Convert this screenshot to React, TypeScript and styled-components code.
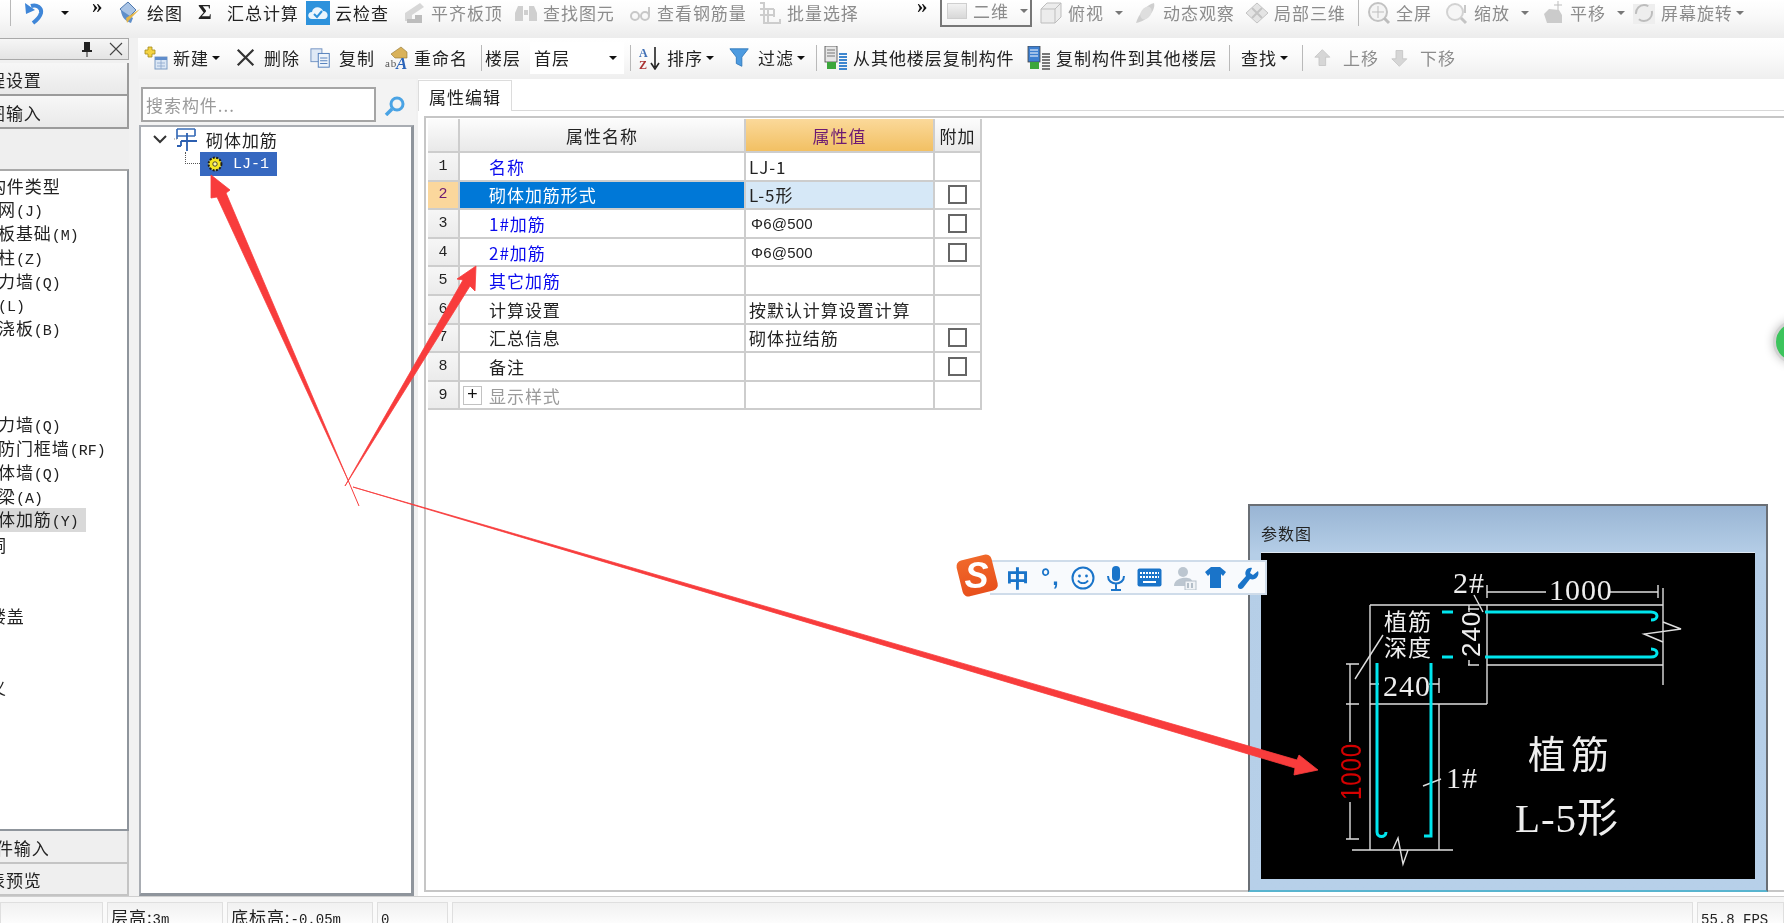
import React from "react";
import styled, { createGlobalStyle } from "styled-components";

const cjk = `"Noto Sans CJK SC", "Liberation Sans", sans-serif`;
const mono = `"Liberation Mono", "Noto Sans CJK SC", monospace`;
const serif = `"Liberation Serif", "Noto Sans CJK SC", serif`;

const Global = createGlobalStyle`
  html, body { margin: 0; padding: 0; background: #fff; }
  * { box-sizing: border-box; }
`;

const Root = styled.div`
  position: relative;
  width: 1784px;
  height: 923px;
  overflow: hidden;
  display: flex;
  flex-direction: column;
  background: #f1f1f1;
  color: #222;
  font-family: ${cjk};
  font-size: 17px;
  letter-spacing: 0.95px;
  line-height: 1;
  filter: blur(0.35px);
`;

const TopBar = styled.div`
  height: 38px;
  flex: none;
  display: flex;
  align-items: center;
  padding-bottom: 13px;
  background: linear-gradient(#ffffff, #f9f9f9 45%, #ececec);
`;

const SecondBar = styled.div`
  height: 41px;
  flex: none;
  display: flex;
  align-items: center;
  padding: 0 0 2px 6px;
  background: linear-gradient(#ffffff, #fbfbfb 40%, #efefef);
`;

const MainColumn = styled.div`
  flex: 1;
  min-width: 0;
  display: flex;
  flex-direction: column;
`;

const Workspace = styled.div`
  flex: 1;
  min-height: 0;
  display: flex;
`;

const ToolWrap = styled.div<{ $w: number; $muted?: boolean }>`
  width: ${(p) => p.$w}px;
  flex: none;
  display: flex;
  align-items: center;
  white-space: nowrap;
  color: ${(p) => (p.$muted ? "#8c8c8c" : "#222")};
`;

const IconSlot = styled.span<{ $w?: number }>`
  width: ${(p) => p.$w ?? 29}px;
  height: 24px;
  flex: none;
  display: flex;
  align-items: center;
`;

const Caret = styled.i<{ $far?: boolean; $muted?: boolean }>`
  width: 0;
  height: 0;
  flex: none;
  margin-left: ${(p) => (p.$far ? 11 : 3)}px;
  border-left: 4px solid transparent;
  border-right: 4px solid transparent;
  border-top: 4px solid ${(p) => (p.$muted ? "#777" : "#111")};
`;

const Sep = styled.i<{ $after?: number; $before?: number }>`
  width: 1px;
  height: 26px;
  flex: none;
  margin-left: ${(p) => p.$before ?? 0}px;
  margin-right: ${(p) => p.$after ?? 0}px;
  background: #b9b9b9;
`;

const Chevrons = styled.span<{ $w: number }>`
  width: ${(p) => p.$w}px;
  flex: none;
  align-self: flex-start;
  font: bold 21px ${serif};
  letter-spacing: 0;
  color: #111;
  margin-top: -6px;
`;

const ViewCombo = styled.div`
  width: 92px;
  height: 31px;
  margin: -2px 7px 0 0;
  flex: none;
  display: flex;
  align-items: center;
  padding-left: 5px;
  border: 2px solid #777;
  border-top: 0;
  color: #8c8c8c;
`;

const Swatch = styled.i`
  width: 20px;
  height: 16px;
  margin-right: 6px;
  flex: none;
  background: linear-gradient(#f2f2f2, #d8d8d8);
  border: 1px solid #cfcfcf;
`;

const FloorLabel = styled.span`
  width: 45px;
  flex: none;
`;

const FloorCombo = styled.div`
  width: 94px;
  height: 32px;
  flex: none;
  margin-right: 6px;
  display: flex;
  align-items: center;
  justify-content: space-between;
  padding: 0 7px 0 4px;
  background: #fff;
`;

const Body = styled.div`
  height: 858px;
  flex: none;
  display: flex;
`;

const LeftPanel = styled.div`
  width: 138px;
  flex: none;
  display: flex;
  flex-direction: column;
  padding-right: 9px;
`;

const PanelHead = styled.div`
  height: 22px;
  flex: none;
  margin-bottom: 3px;
  display: flex;
  align-items: center;
  justify-content: flex-end;
  gap: 16px;
  padding-right: 5px;
  background: linear-gradient(#f6f6f6, #e4e4e4);
  border: 1px solid #a9a9a9;
  border-left: 0;
`;

const NavBtn = styled.div<{ $shift: number; $flat?: boolean }>`
  height: ${(p) => (p.$flat ? 32.5 : 33)}px;
  flex: none;
  display: flex;
  align-items: center;
  padding-top: 2px;
  overflow: hidden;
  white-space: nowrap;
  background: ${(p) => (p.$flat ? "#efefef" : "linear-gradient(#f7f7f7, #e9e9e9)")};
  border-right: 2px solid ${(p) => (p.$flat ? "#c4c4c4" : "#9b9b9b")};
  border-bottom: 2px solid ${(p) => (p.$flat ? "#c4c4c4" : "#9b9b9b")};
  & > span {
    margin-left: ${(p) => p.$shift}px;
  }
`;

const PanelGap = styled.div`
  flex: none;
  height: 40px;
  background: #efefef;
`;

const NavList = styled.div`
  height: 662px;
  flex: none;
  overflow: hidden;
  padding-top: 3px;
  background: #fff;
  border-top: 2px solid #a9a9a9;
  border-right: 2px solid #8f959c;
  border-bottom: 2px solid #8f959c;
`;

const NavRow = styled.div<{ $child?: boolean; $active?: boolean }>`
  height: 23.9px;
  width: 86px;
  display: flex;
  align-items: center;
  white-space: nowrap;
  background: ${(p) => (p.$active ? "#d9d9d9" : "transparent")};
  & > span {
    margin-left: ${(p) => (p.$child ? -20 : -47)}px;
  }
`;

const Latin = styled.span`
  font-family: ${mono};
  font-size: 15px;
  letter-spacing: 0;
`;

const TreeCol = styled.div`
  width: 277px;
  margin-left: 1px;
  flex: none;
  display: flex;
  flex-direction: column;
`;

const SearchRow = styled.div`
  height: 46px;
  flex: none;
  display: flex;
  align-items: flex-start;
  padding: 8px 0 0 2px;
  gap: 8px;
  background: #f3f3f3;
`;

const SearchBox = styled.div`
  width: 235px;
  height: 35px;
  display: flex;
  align-items: center;
  padding-left: 3px;
  background: #fff;
  border: 2px solid #a5a5a5;
  color: #9a9a9a;
`;

const SearchBtn = styled.span`
  margin-top: 9px;
  display: block;
`;

const TreeBox = styled.div`
  flex: 1;
  margin-right: 2px;
  background: #fff;
  border-top: 2px solid #a9adb3;
  border-left: 2px solid #a9adb3;
  border-right: 3px solid #8f959c;
  border-bottom: 3px solid #8f959c;
`;

const TreeRootRow = styled.div`
  height: 25px;
  display: flex;
  align-items: center;
  padding-left: 12px;
  white-space: nowrap;
`;

const TreeChildRow = styled.div`
  height: 24px;
  display: flex;
  align-items: flex-start;
  padding-left: 44px;
`;

const Connector = styled.i`
  width: 15px;
  height: 12px;
  flex: none;
  border-left: 1px dotted #555;
  border-bottom: 1px dotted #555;
`;

const TreeSelected = styled.div`
  width: 77px;
  height: 24px;
  display: flex;
  align-items: center;
  gap: 10px;
  padding-left: 7px;
  background: #3668c0;
  color: #fff;
`;

const PropCol = styled.div`
  flex: 1;
  margin-left: 2px;
  display: flex;
  flex-direction: column;
  background: #fff;
`;

const TabRow = styled.div`
  height: 32px;
  flex: none;
  display: flex;
  align-items: flex-end;
  border-bottom: 1px solid #d8d8d8;
  background: #fff;
`;

const Tab = styled.div`
  width: 94px;
  height: 31px;
  margin-bottom: -1px;
  display: flex;
  align-items: center;
  justify-content: center;
  background: #fff;
  border: 1px solid #dcdcdc;
  border-bottom: 0;
`;

const TablePanel = styled.div`
  flex: 1;
  margin: 5px 0 4px 6px;
  background: #fff;
  border-top: 2px solid #c6c6c6;
  border-left: 2px solid #c6c6c6;
  border-bottom: 2px solid #c6c6c6;
  padding: 1px 0 0 2px;
`;

const Grid = styled.div`
  width: 554px;
  display: grid;
  grid-template-columns: 32px 286px 189px 47px;
  grid-template-rows: 34px repeat(9, 28.6px);
`;

const Cell = styled.div<{ $tone?: string }>`
  display: flex;
  align-items: center;
  overflow: hidden;
  white-space: nowrap;
  border-right: 2px solid #cdcdcd;
  border-bottom: 2px solid #cdcdcd;
  background: ${(p) => p.$tone ?? "#fff"};
`;

const HeadCell = styled(Cell)<{ $accent?: boolean }>`
  justify-content: center;
  color: ${(p) => (p.$accent ? "#6d1a72" : "#222")};
  background: ${(p) =>
    p.$accent ? "linear-gradient(#fbd99a, #f2c063)" : "linear-gradient(#fcfcfc, #e9e9e9)"};
`;

const IndexCell = styled(Cell)<{ $on?: boolean }>`
  justify-content: center;
  font-family: ${mono};
  font-size: 15px;
  letter-spacing: 0;
  color: ${(p) => (p.$on ? "#6d1a72" : "#222")};
  background: ${(p) => (p.$on ? "#fbd79c" : "linear-gradient(#f6f6f6, #ebebeb)")};
`;

const NameCell = styled(Cell)<{ $kind: string }>`
  padding-left: ${(p) => (p.$kind === "fold" ? 3 : 29)}px;
  color: ${(p) =>
    p.$kind === "blue" ? "#0a0aee" : p.$kind === "sel" ? "#fff" : p.$kind === "fold" ? "#9a9a9a" : "#222"};
  background: ${(p) => (p.$kind === "sel" ? "#0078d7" : "#fff")};
`;

const ValueCell = styled(Cell)<{ $sel?: boolean; $rebar?: boolean }>`
  padding-left: ${(p) => (p.$rebar ? 5 : 3)}px;
  background: ${(p) => (p.$sel ? "#d6e8f7" : "#fff")};
  ${(p) => p.$rebar && `font-family: "Liberation Sans", sans-serif; font-size: 15px; letter-spacing: 0.2px;`}
`;

const CheckCell = styled(Cell)`
  justify-content: center;
`;

const Check = styled.i`
  width: 19px;
  height: 19px;
  border: 2px solid #666;
  background: #fff;
`;

const Plus = styled.i`
  width: 19px;
  height: 19px;
  margin-right: 7px;
  flex: none;
  display: flex;
  align-items: center;
  justify-content: center;
  border: 1px solid #c2c2c2;
  font: normal 18px ${mono};
  letter-spacing: 0;
  color: #111;
`;

const Strip = styled.div`
  height: 6px;
  flex: none;
  background: #f6f6f6;
  border-top: 1px solid #cfcfcf;
`;

const StatusBar = styled.div`
  height: 21px;
  flex: none;
  display: flex;
  gap: 4px;
  background: #fafafa;
`;

const StatusCell = styled.div<{ $w?: number; $fill?: boolean }>`
  width: ${(p) => (p.$w ? `${p.$w}px` : "auto")};
  flex: ${(p) => (p.$fill ? 1 : "none")};
  padding: 5px 0 0 3px;
  overflow: hidden;
  white-space: nowrap;
  background: linear-gradient(#f1f1f1, #fcfcfc);
  border: 1px solid #dfdfdf;
  border-bottom: 0;
  ${Latin} {
    font-size: 14px;
  }
`;

const Overlay = styled.svg`
  position: absolute;
  left: 0;
  top: 0;
  pointer-events: none;
`;

const GreenBall = styled.div`
  position: absolute;
  left: 1773px;
  top: 320px;
  width: 44px;
  height: 44px;
  border-radius: 50%;
  background: #3cc45c;
  border: 3px solid #d2d2d2;
  box-shadow: 0 0 10px rgba(0, 0, 0, 0.25);
`;

const Dialog = styled.div`
  position: absolute;
  left: 1248px;
  top: 504px;
  width: 520px;
  height: 388px;
  display: flex;
  flex-direction: column;
  padding: 0 11px 11px 11px;
  background: linear-gradient(#99b5d4, #b5cee7 48px, #b7d0e9);
  border: 2px solid #6a6f75;
  border-bottom-color: #58b4cf;
`;

const DialogTitle = styled.div`
  height: 46px;
  flex: none;
  padding-top: 19px;
  font-size: 16px;
  color: #222;
`;

const DrawingFrame = styled.div`
  flex: 1;
  background: #000;
  border-top: 1px solid #dfe8f2;
`;

const Sogou = styled.div`
  position: absolute;
  left: 990px;
  top: 560px;
  width: 277px;
  height: 35px;
  background: #f8fafd;
  border: 2px solid #cfdcea;
  border-left: 0;
`;

const SogouLogo = styled.svg`
  position: absolute;
  left: 954px;
  top: 552px;
`;

const SogouIcons = styled.div`
  height: 100%;
  padding-left: 16px;
  display: flex;
  align-items: center;
  color: #1a74c9;
`;

const SogouGlyph = styled.span<{ $w: number; $latin?: boolean }>`
  width: ${(p) => p.$w}px;
  flex: none;
  display: flex;
  align-items: center;
  font-family: ${(p) => (p.$latin ? `"Liberation Sans", sans-serif` : cjk)};
  font-weight: 700;
  font-size: 23px;
  letter-spacing: ${(p) => (p.$latin ? 2 : 0)}px;
`;

/* ---------- icons ---------- */
type Sz = { s?: number };
const Svg = ({ s = 24, children }: Sz & { children: React.ReactNode }) => (
  <svg width={s} height={s} viewBox="0 0 24 24">
    {children}
  </svg>
);

const Undo = () => (
  <Svg>
    <path d="M9 5C15 3 20 7 19 12C18 16 15 19 11 22" fill="none" stroke="#3f86d8" strokeWidth="4" />
    <path d="M3 2L4 13L13 9Z" fill="#3f86d8" />
  </Svg>
);
const Draw = () => (
  <Svg>
    <path d="M2 8L10 1L18 9L10 17Z" fill="#a9c4e6" stroke="#4f78ad" />
    <path d="M3 9C3 14 6 20 13 22L15 17" fill="#5f8fca" />
    <path d="M22 8L12 18L9 22L8 17Z" fill="#e3b548" />
  </Svg>
);
const SigmaGlyph = styled.span`
  font: bold 21px "Liberation Serif", serif;
  letter-spacing: 0;
`;
const CloudCheck = () => (
  <Svg>
    <rect x="0" y="0" width="24" height="24" fill="#2d92dc" />
    <path d="M6 18C1 18 1 11 6 11C7 5 15 5 17 10C23 10 23 18 18 18Z" fill="#eaf5fd" />
    <path d="M8 13L11 16L16 10" fill="none" stroke="#2d92dc" strokeWidth="2" />
  </Svg>
);
const AlignTop = () => (
  <Svg>
    <path d="M3 20V12L18 2L22 6L10 14V20Z" fill="#d7d7d7" />
    <path d="M5 22H20V14H13V18H5Z" fill="#bdbdbd" />
  </Svg>
);
const Binoculars = () => (
  <Svg>
    <path d="M4 5H9V20H1V12ZM15 5H20L23 12V20H15ZM10 9H14V14H10Z" fill="#cfcfcf" />
  </Svg>
);
const Glasses = () => (
  <Svg>
    <circle cx="7" cy="15" r="4" fill="none" stroke="#c8c8c8" strokeWidth="2" />
    <circle cx="17" cy="15" r="4" fill="none" stroke="#c8c8c8" strokeWidth="2" />
    <path d="M21 15V6" stroke="#c8c8c8" strokeWidth="2" />
  </Svg>
);
const Batch = () => (
  <Svg>
    <path d="M2 2H6V22H22V18M2 8H16M2 14H16M10 8V22M16 8V16" fill="none" stroke="#cdcdcd" strokeWidth="2" />
  </Svg>
);
const Box3d = () => (
  <Svg>
    <path d="M2 8L8 2H22V16L16 22H2Z" fill="#ececec" stroke="#bdbdbd" />
    <path d="M2 8H16V22M16 8L22 2" fill="none" stroke="#bdbdbd" />
  </Svg>
);
const Orbit = () => (
  <Svg>
    <path d="M2 22C4 14 12 4 20 2C22 8 14 20 2 22Z" fill="#cfcfcf" />
    <ellipse cx="12" cy="12" rx="5" ry="7" fill="#dedede" transform="rotate(35 12 12)" />
  </Svg>
);
const Cube3 = () => (
  <Svg>
    <path d="M12 2L23 12L12 22L1 12Z" fill="#e4e4e4" stroke="#c4c4c4" />
    <path d="M7 7L17 17M17 7L7 17" stroke="#c4c4c4" strokeWidth="2" />
  </Svg>
);
const Fit = () => (
  <Svg>
    <circle cx="11" cy="11" r="9" fill="#f4f4f4" stroke="#c2c2c2" strokeWidth="2" />
    <path d="M11 5V17M5 11H17" stroke="#bdbdbd" />
    <path d="M17 17L22 22" stroke="#bdbdbd" strokeWidth="3" />
  </Svg>
);
const Zoom = () => (
  <Svg>
    <circle cx="10" cy="11" r="8" fill="#f6f6f6" stroke="#d2d2d2" strokeWidth="2" />
    <path d="M16 17L21 22" stroke="#c4c4c4" strokeWidth="3" />
    <path d="M20 4V12" stroke="#c8c8c8" strokeWidth="2" />
  </Svg>
);
const Pan = () => (
  <Svg>
    <path d="M3 13L8 8L18 9L21 14V22H6Z" fill="#cbcbcb" />
    <path d="M17 0V9M13 4H21" stroke="#bdbdbd" />
  </Svg>
);
const Rotate = () => (
  <Svg>
    <rect x="1" y="3" width="22" height="20" fill="#eeeeee" />
    <circle cx="12" cy="12" r="8" fill="none" stroke="#bdbdbd" strokeWidth="2" strokeDasharray="18 6" />
  </Svg>
);
const NewIcon = () => (
  <Svg>
    <path d="M4 1H8V4H11V8H8V11H4V8H1V4H4Z" fill="#f4d342" stroke="#a38a1c" strokeWidth=".8" />
    <rect x="11" y="11" width="12" height="12" fill="#dbe7f5" stroke="#7d9cc4" />
    <rect x="11" y="11" width="12" height="3" fill="#5f8ccb" />
    <path d="M13 17H21M13 20H21M17 14V23" stroke="#8aa6cb" strokeWidth=".8" />
  </Svg>
);
const Cross = () => (
  <Svg s={22}>
    <path d="M3 3L20 20M20 3L3 20" stroke="#333" strokeWidth="2.4" />
  </Svg>
);
const CopyIcon = () => (
  <Svg s={22}>
    <rect x="1" y="2" width="12" height="14" fill="#dfe9f6" stroke="#6d8fc0" />
    <rect x="9" y="7" width="12" height="15" fill="#eef4fb" stroke="#4b79b8" />
    <path d="M11 12H19M11 15H19M11 18H19" stroke="#4b79b8" />
  </Svg>
);
const RenameIcon = () => (
  <Svg>
    <path d="M6 8L16 1L22 6V12H10Z" fill="#d9b25a" stroke="#8f7430" strokeWidth=".6" />
    <text x="0" y="21" fontFamily="Liberation Serif" fontSize="11" fill="#555">
      ab
    </text>
    <text x="11" y="23" fontFamily="Liberation Serif" fontSize="17" fontWeight="700" fontStyle="italic" fill="#2a63b8">
      A
    </text>
  </Svg>
);
const Sort = () => (
  <Svg>
    <text x="1" y="11" fontFamily="Liberation Serif" fontSize="12" fontWeight="700" fill="#3f6fb5">
      A
    </text>
    <text x="1" y="23" fontFamily="Liberation Serif" fontSize="12" fontWeight="700" fill="#a33">
      Z
    </text>
    <path d="M17 1V21M13 17L17 23L21 17" fill="none" stroke="#222" strokeWidth="1.6" />
  </Svg>
);
const Funnel = () => (
  <Svg s={22}>
    <path d="M1 2H21L14 11V21L8 18V11Z" fill="#4d9be0" stroke="#2f78bb" />
  </Svg>
);
const CopyFrom = ({ flip }: { flip?: boolean }) => (
  <Svg>
    <rect x="1" y="0" width="12" height="16" fill={flip ? "#3d7fd0" : "#e6e6e6"} stroke="#444" strokeWidth=".8" />
    <path d="M3 4H11M3 7H11M3 10H11" stroke={flip ? "#fff" : "#777"} />
    <rect x="3" y="16" width="9" height="7" fill="#3ca63c" />
    <path d="M15 8H23M15 11H23M15 14H23M15 17H23M15 20H23M15 23H23" stroke={flip ? "#777" : "#3d86cf"} strokeWidth="1.8" />
  </Svg>
);
const ArrowUpDown = ({ down }: { down?: boolean }) => (
  <Svg s={20}>
    <path
      d={down ? "M8 3H16V13H21L12 22L3 13H8Z" : "M8 21H16V11H21L12 2L3 11H8Z"}
      fill="#d6d6d6"
      stroke="#c4c4c4"
      transform="translate(-2 0)"
    />
  </Svg>
);
const Pin = () => (
  <svg width="12" height="17" viewBox="0 0 12 17">
    <path d="M3 1H9V9H11V11H1V9H3ZM5.5 11H6.5V16H5.5Z" fill="#222" />
  </svg>
);
const Close = () => (
  <svg width="14" height="14" viewBox="0 0 14 14">
    <path d="M1 1L13 13M13 1L1 13" stroke="#444" strokeWidth="1.1" />
  </svg>
);
const Magnifier = () => (
  <svg width="21" height="20" viewBox="0 0 21 20">
    <circle cx="13" cy="8" r="6" fill="none" stroke="#4aa3e4" strokeWidth="3" />
    <path d="M8 13L2 19" stroke="#4aa3e4" strokeWidth="3.5" />
  </svg>
);
const ChevronSvg = styled.svg`
  margin-right: 1px;
  flex: none;
`;
const Chevron = () => (
  <ChevronSvg width="20" height="12" viewBox="0 0 20 12">
    <path d="M1 2L7 8L13 2" fill="none" stroke="#333" strokeWidth="2" />
  </ChevronSvg>
);
const NodeSvg = styled.svg`
  margin-right: 8px;
  flex: none;
`;
const TreeNodeIcon = () => (
  <NodeSvg width="24" height="24" viewBox="0 0 24 24">
    <path d="M3 1H21M3 1V11M21 1V8M3 8H21" fill="none" stroke="#3a6db8" strokeWidth="1.7" />
    <path d="M7 13H23M13 5V23M7 13V18M7 18H3" fill="none" stroke="#2c5fb0" strokeWidth="1.8" />
    <path d="M0 11H4" stroke="#888" strokeDasharray="1 1" />
  </NodeSvg>
);
const GearSvg = styled.svg`
  flex: none;
`;
const Gear = () => (
  <GearSvg width="16" height="16" viewBox="0 0 16 16">
    <circle cx="8" cy="8" r="6.4" fill="#f5e623" stroke="#1c1c1c" strokeWidth="2" strokeDasharray="2 1.4" />
    <circle cx="8" cy="8" r="4.6" fill="#f5e623" />
    <circle cx="8" cy="8" r="2.2" fill="#fff8a8" stroke="#1c1c1c" strokeWidth=".8" />
  </GearSvg>
);

/* ---------- data ---------- */
type ToolProps = {
  w: number;
  icon: React.ReactNode;
  label: string;
  muted?: boolean;
  caret?: boolean;
  far?: boolean;
};
const Tool = ({ w, icon, label, muted, caret, far }: ToolProps) => (
  <ToolWrap $w={w} $muted={muted}>
    <IconSlot>{icon}</IconSlot>
    <span>{label}</span>
    {caret && <Caret $far={far} $muted={muted} />}
  </ToolWrap>
);

const navItems: { t: string; l?: string; child?: boolean; active?: boolean }[] = [
  { t: "常用构件类型" },
  { t: "轴网", l: "(J)", child: true },
  { t: "筏板基础", l: "(M)", child: true },
  { t: "框柱", l: "(Z)", child: true },
  { t: "剪力墙", l: "(Q)", child: true },
  { t: "梁", l: "(L)", child: true },
  { t: "现浇板", l: "(B)", child: true },
  { t: "轴线" },
  { t: "柱" },
  { t: "墙" },
  { t: "剪力墙", l: "(Q)", child: true },
  { t: "人防门框墙", l: "(RF)", child: true },
  { t: "砌体墙", l: "(Q)", child: true },
  { t: "暗梁", l: "(A)", child: true },
  { t: "砌体加筋", l: "(Y)", child: true, active: true },
  { t: "门窗洞" },
  { t: "梁" },
  { t: "板" },
  { t: "空心楼盖" },
  { t: "基础" },
  { t: "其它" },
  { t: "自定义" },
];

type Row = { name: string; kind: string; value?: string; check?: boolean; rebar?: boolean };
const rows: Row[] = [
  { name: "名称", kind: "blue", value: "LJ-1" },
  { name: "砌体加筋形式", kind: "sel", value: "L-5形", check: true },
  { name: "1#加筋", kind: "blue", value: "Φ6@500", check: true, rebar: true },
  { name: "2#加筋", kind: "blue", value: "Φ6@500", check: true, rebar: true },
  { name: "其它加筋", kind: "blue" },
  { name: "计算设置", kind: "plain", value: "按默认计算设置计算" },
  { name: "汇总信息", kind: "plain", value: "砌体拉结筋", check: true },
  { name: "备注", kind: "plain", check: true },
  { name: "显示样式", kind: "fold" },
];

/* ---------- diagram, in page coordinates ---------- */
const DiagramSvg = styled.svg`
  display: block;
`;
const Diagram = () => (
  <DiagramSvg width="495" height="326" viewBox="1260 553 495 326">
    <g fill="none" stroke="#dedede" strokeWidth="1.4">
      <path d="M1369 605H1662M1486 605V704M1369 704H1486M1369 605V850M1438 704V850M1351 850H1452" />
      <path d="M1486 665H1662M1662 588V685" />
      <path d="M1392 849L1397 838L1402 864L1407 850" />
      <path d="M1662 622L1680 629L1643 634L1662 642" />
      <path d="M1486 585V598M1657 585V598M1486 592H1545M1608 592H1657" />
      <path d="M1473 595L1482 612" />
      <path d="M1382 635L1354 679" />
      <path d="M1467 665H1478M1468 660V665M1467 609H1478M1468 605V612" />
      <path d="M1369 684H1378M1428 684H1438M1438 678V693" />
      <path d="M1345 664H1358M1345 704H1358M1345 839H1358M1349 664V742M1349 802V839" />
      <path d="M1422 786L1440 779" />
    </g>
    <g fill="none" stroke="#00e6ee" strokeWidth="3">
      <path d="M1484 612H1650C1658 612 1658 620 1650 620" />
      <path d="M1484 657H1650C1658 657 1658 649 1650 649" />
      <path d="M1441 612H1452M1441 657H1452" />
      <path d="M1376 663V832C1376 838 1385 838 1385 832" />
      <path d="M1430 663V836H1423" />
    </g>
    <g fontFamily={serif} fontSize="30" fill="#eeeeee">
      <text x="1548" y="600">1000</text>
      <text x="1452" y="593">2#</text>
      <text x="1382" y="696">240</text>
      <text x="1445" y="788">1#</text>
      <text transform="translate(1479 657) rotate(-90)" fontFamily="Liberation Sans" fontSize="26">240</text>
      <text x="1383" y="630" fontFamily={cjk} fontSize="23">植筋</text>
      <text x="1383" y="656" fontFamily={cjk} fontSize="23">深度</text>
      <text x="1527" y="768" fontFamily={cjk} fontSize="38" letterSpacing="5">植筋</text>
      <text x="1514" y="832" fontSize="41">L-5形</text>
    </g>
    <text
      transform="translate(1360 800) rotate(-90)"
      fontFamily="Liberation Sans"
      fontSize="29"
      fill="#d40000"
      textLength={57}
      lengthAdjust="spacingAndGlyphs"
    >
      1000
    </text>
  </DiagramSvg>
);

const App = () => (
  <Root>
    <Global />
    <TopBar>
      <Sep $before={10} $after={11} />
      <ToolWrap $w={70}>
        <IconSlot $w={36}>
          <Undo />
        </IconSlot>
        <Caret />
      </ToolWrap>
      <Chevrons $w={26}>»</Chevrons>
      <Tool w={80} icon={<Draw />} label="绘图" />
      <Tool w={108} icon={<SigmaGlyph>Σ</SigmaGlyph>} label="汇总计算" />
      <Tool w={96} icon={<CloudCheck />} label="云检查" />
      <Tool w={112} icon={<AlignTop />} label="平齐板顶" muted />
      <Tool w={114} icon={<Binoculars />} label="查找图元" muted />
      <Tool w={130} icon={<Glasses />} label="查看钢筋量" muted />
      <Tool w={159} icon={<Batch />} label="批量选择" muted />
      <Chevrons $w={23}>»</Chevrons>
      <ViewCombo>
        <Swatch />
        <span>二维</span>
        <Caret $far $muted />
      </ViewCombo>
      <Tool w={95} icon={<Box3d />} label="俯视" muted caret far />
      <Tool w={111} icon={<Orbit />} label="动态观察" muted />
      <Tool w={113} icon={<Cube3 />} label="局部三维" muted />
      <Sep $after={8} />
      <Tool w={78} icon={<Fit />} label="全屏" muted />
      <Tool w={96} icon={<Zoom />} label="缩放" muted caret far />
      <Tool w={91} icon={<Pan />} label="平移" muted caret far />
      <Tool w={120} icon={<Rotate />} label="屏幕旋转" muted caret />
    </TopBar>
    <Body>
      <LeftPanel>
        <PanelHead>
          <Pin />
          <Close />
        </PanelHead>
        <NavBtn $shift={-30}>
          <span>工程设置</span>
        </NavBtn>
        <NavBtn $shift={-30}>
          <span>绘图输入</span>
        </NavBtn>
        <PanelGap />
        <NavList>
          {navItems.map((n, i) => (
            <NavRow key={i} $child={n.child} $active={n.active}>
              <span>
                {n.t}
                {n.l && <Latin>{n.l}</Latin>}
              </span>
            </NavRow>
          ))}
        </NavList>
        <NavBtn $shift={-40} $flat>
          <span>单构件输入</span>
        </NavBtn>
        <NavBtn $shift={-30} $flat>
          <span>报表预览</span>
        </NavBtn>
      </LeftPanel>
      <MainColumn>
        <SecondBar>
          <Tool w={91} icon={<NewIcon />} label="新建" caret />
          <Tool w={75} icon={<Cross />} label="删除" />
          <Tool w={75} icon={<CopyIcon />} label="复制" />
          <Tool w={96} icon={<RenameIcon />} label="重命名" />
          <Sep $after={3} />
          <FloorLabel>楼层</FloorLabel>
          <FloorCombo>
            <span>首层</span>
            <Caret />
          </FloorCombo>
          <Sep $after={7} />
          <Tool w={91} icon={<Sort />} label="排序" caret />
          <Tool w={87} icon={<Funnel />} label="过滤" caret />
          <Sep $after={7} />
          <Tool w={203} icon={<CopyFrom />} label="从其他楼层复制构件" />
          <Tool w={202} icon={<CopyFrom flip />} label="复制构件到其他楼层" />
          <Sep $after={11} />
          <ToolWrap $w={61}>
            <span>查找</span>
            <Caret />
          </ToolWrap>
          <Sep $after={11} />
          <Tool w={77} icon={<ArrowUpDown />} label="上移" muted />
          <Tool w={77} icon={<ArrowUpDown down />} label="下移" muted />
        </SecondBar>
        <Workspace>
          <TreeCol>
            <SearchRow>
              <SearchBox>搜索构件...</SearchBox>
              <SearchBtn>
                <Magnifier />
              </SearchBtn>
            </SearchRow>
            <TreeBox>
              <TreeRootRow>
                <Chevron />
                <TreeNodeIcon />
                <span>砌体加筋</span>
              </TreeRootRow>
              <TreeChildRow>
                <Connector />
                <TreeSelected>
                  <Gear />
                  <Latin>LJ-1</Latin>
                </TreeSelected>
              </TreeChildRow>
            </TreeBox>
          </TreeCol>
          <PropCol>
            <TabRow>
              <Tab>属性编辑</Tab>
            </TabRow>
            <TablePanel>
              <Grid>
                <HeadCell />
                <HeadCell>属性名称</HeadCell>
                <HeadCell $accent>属性值</HeadCell>
                <HeadCell>附加</HeadCell>
                {rows.map((r, i) => (
                  <React.Fragment key={r.name}>
                    <IndexCell $on={i === 1}>{i + 1}</IndexCell>
                    <NameCell $kind={r.kind}>
                      {r.kind === "fold" && <Plus>+</Plus>}
                      {r.name}
                    </NameCell>
                    <ValueCell $sel={i === 1} $rebar={r.rebar}>
                      {r.value}
                    </ValueCell>
                    <CheckCell>{r.check && <Check />}</CheckCell>
                  </React.Fragment>
                ))}
              </Grid>
            </TablePanel>
          </PropCol>
        </Workspace>
      </MainColumn>
    </Body>
    <Strip />
    <StatusBar>
      <StatusCell $w={103} />
      <StatusCell $w={116}>
        层高:<Latin>3m</Latin>
      </StatusCell>
      <StatusCell $w={146}>
        底标高:<Latin>-0.05m</Latin>
      </StatusCell>
      <StatusCell $w={71}>
        <Latin>0</Latin>
      </StatusCell>
      <StatusCell $fill />
      <StatusCell $w={87}>
        <Latin>55.8 FPS</Latin>
      </StatusCell>
    </StatusBar>

    <GreenBall />
    <Dialog>
      <DialogTitle>参数图</DialogTitle>
      <DrawingFrame>
        <Diagram />
      </DrawingFrame>
    </Dialog>
    <Sogou>
      <SogouIcons>
        <SogouGlyph $w={35}>中</SogouGlyph>
        <SogouGlyph $w={30} $latin>°,</SogouGlyph>
        <SogouGlyph $w={35}>
          <svg width="24" height="24" viewBox="0 0 24 24">
            <circle cx="12" cy="12" r="10.5" fill="none" stroke="#1a74c9" strokeWidth="2" />
            <circle cx="8.5" cy="10" r="1.4" fill="#1a74c9" />
            <circle cx="15.5" cy="10" r="1.4" fill="#1a74c9" />
            <path d="M7 14.5C9 18 15 18 17 14.5" fill="none" stroke="#1a74c9" strokeWidth="1.8" />
          </svg>
        </SogouGlyph>
        <SogouGlyph $w={31}>
          <svg width="20" height="26" viewBox="0 0 20 26">
            <rect x="6" y="1" width="8" height="15" rx="4" fill="#1a74c9" />
            <path d="M2 11C2 21 18 21 18 11M10 19V24M5 25H15" fill="none" stroke="#1a74c9" strokeWidth="2" />
          </svg>
        </SogouGlyph>
        <SogouGlyph $w={35}>
          <svg width="25" height="19" viewBox="0 0 25 19">
            <rect x="0.5" y="0.5" width="24" height="18" rx="2" fill="#1a74c9" />
            <path d="M3 5H22M3 9H22" stroke="#fff" strokeWidth="2" strokeDasharray="2 1" />
            <path d="M6 14H19" stroke="#fff" strokeWidth="2" />
          </svg>
        </SogouGlyph>
        <SogouGlyph $w={32}>
          <svg width="25" height="24" viewBox="0 0 25 24">
            <circle cx="11" cy="6" r="5" fill="#bcc6d0" />
            <path d="M2 20C2 10 20 10 20 15H14V20Z" fill="#bcc6d0" />
            <rect x="13" y="15" width="11" height="9" fill="#f0f3f6" stroke="#b5c0ca" />
            <path d="M16 17V22M20 17V22" stroke="#9aa8b5" strokeWidth="1.4" />
          </svg>
        </SogouGlyph>
        <SogouGlyph $w={33}>
          <svg width="23" height="23" viewBox="0 0 23 23">
            <path d="M7 1H16L22 6L19 10L17 8V22H6V8L4 10L1 6Z" fill="#1a74c9" />
          </svg>
        </SogouGlyph>
        <SogouGlyph $w={24}>
          <svg width="23" height="24" viewBox="0 0 23 24">
            <path d="M21 5L16 9L13 7L15 2C10 1 7 6 9 10L1 19C0 23 4 24 6 22L13 13C18 15 23 10 21 5Z" fill="#1a74c9" />
          </svg>
        </SogouGlyph>
      </SogouIcons>
    </Sogou>
    <SogouLogo width="48" height="48" viewBox="0 0 48 48">
      <defs>
        <linearGradient id="sg" x1="0" y1="0" x2="0" y2="1">
          <stop offset="0" stopColor="#f0682a" />
          <stop offset="1" stopColor="#e8501c" />
        </linearGradient>
      </defs>
      <rect x="5" y="5" width="36" height="37" rx="6" fill="url(#sg)" transform="rotate(-14 23 23)" />
      <text
        x="23"
        y="36"
        textAnchor="middle"
        fontFamily="Liberation Sans"
        fontWeight="700"
        fontStyle="italic"
        fontSize="36"
        fill="#fff"
      >
        S
      </text>
    </SogouLogo>
    <Overlay width="1784" height="923" viewBox="0 0 1784 923">
      <g fill="#f83c3c" stroke="#f83c3c" strokeWidth="0.8" strokeLinejoin="round">
        <path d="M348 480L226 193L230 190L211 175L211 198L217 197Z" />
        <path d="M345 486L463 280L457 279L476 266L475 291L470 286Z" />
        <path d="M353 487L1297 760L1299 755L1318 770L1294 775L1295 768Z" />
      </g>
      <path d="M348 480L359 506" stroke="#f83c3c" strokeWidth="1" />
    </Overlay>
  </Root>
);

export default App;
